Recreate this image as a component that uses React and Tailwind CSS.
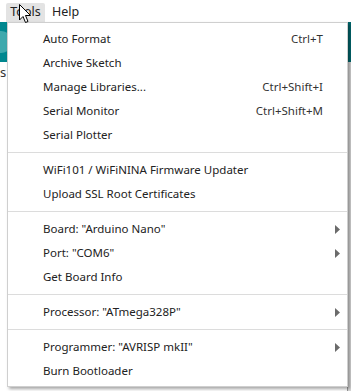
import React from "react";

const font = { fontFamily: '"Noto Sans", "Open Sans", sans-serif' };

function Item({ label, shortcut, sub }) {
  return (
    <div className="flex h-[24px] items-center pl-[35px] pr-[7px] text-[11.5px] text-[#222]">
      <span className="flex-1 whitespace-nowrap">{label}</span>
      {shortcut && <span className="mr-[17px] whitespace-nowrap text-[#333]">{shortcut}</span>}
      {sub && (
        <svg width="5" height="9" viewBox="0 0 5 9">
          <path d="M0 0 L5 4.5 L0 9 Z" fill="#6b6b6b" />
        </svg>
      )}
    </div>
  );
}

function Sep() {
  return (
    <div className="flex h-[11px] items-center">
      <div className="h-px w-full bg-[#dcdcdc]" />
    </div>
  );
}

export default function App() {
  return (
    <div className="relative h-[391px] w-[351px] overflow-hidden bg-white" style={font}>
      {/* menu bar */}
      <div className="flex h-[22px] items-end pl-[6px] text-[12.5px] text-[#222]">
        <div className="flex h-[19px] w-[39px] items-center justify-center rounded-t-[2px] bg-[#e3e3e3]">Tools</div>
        <div className="flex h-[19px] items-center pl-[7px]">Help</div>
      </div>
      {/* background content */}
      <div className="flex">
        <div className="w-[7px]">
          <div className="flex h-[40px] items-center overflow-hidden bg-[#00878f]">
            <div className="-ml-[10px] h-[22px] w-[22px] shrink-0 rounded-full bg-[#3fa9ad]" />
          </div>
          <div className="mt-[4px] text-[13px] leading-none text-[#333]">s</div>
        </div>
        <div className="flex-1" />
        <div className="w-[4px]">
          <div className="h-[40px] bg-[#00676d]" />
          <div className="h-[330px] border-l border-[#999] bg-[#d8d8d8]" />
        </div>
      </div>
      {/* dropdown menu */}
      <div className="absolute left-[7px] top-[22px] w-[341px] border border-[#cfcfcf] bg-white pb-[3px] pt-[4px] shadow-[2px_2px_3px_rgba(0,0,0,0.35)]">
        <Item label="Auto Format" shortcut="Ctrl+T" />
        <Item label="Archive Sketch" />
        <Item label="Manage Libraries..." shortcut="Ctrl+Shift+I" />
        <Item label="Serial Monitor" shortcut="Ctrl+Shift+M" />
        <Item label="Serial Plotter" />
        <Sep />
        <Item label="WiFi101 / WiFiNINA Firmware Updater" />
        <Item label="Upload SSL Root Certificates" />
        <Sep />
        <Item label={'Board: "Arduino Nano"'} sub />
        <Item label={'Port: "COM6"'} sub />
        <Item label="Get Board Info" />
        <Sep />
        <Item label={'Processor: "ATmega328P"'} sub />
        <Sep />
        <Item label={'Programmer: "AVRISP mkII"'} sub />
        <Item label="Burn Bootloader" />
      </div>
      {/* cursor */}
      <svg className="absolute left-[19px] top-[4px]" width="13" height="20" viewBox="0 0 13 20">
        <path d="M0.5 0.5 L0.5 16 L4 12.5 L6.5 18.5 L9 17.5 L6.5 11.5 L11.5 11.5 Z" fill="white" stroke="black" strokeWidth="1" strokeLinejoin="miter" />
      </svg>
    </div>
  );
}
